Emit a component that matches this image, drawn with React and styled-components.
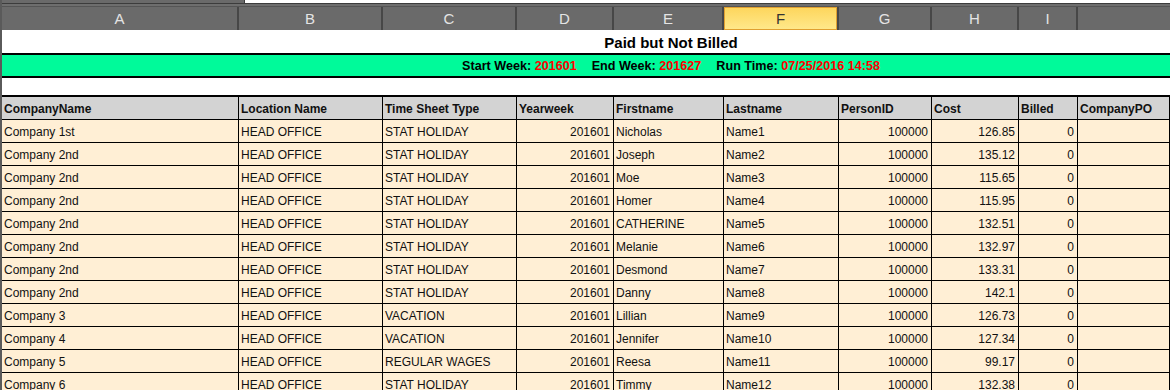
import styled, { createGlobalStyle } from "styled-components";

const GlobalStyle = createGlobalStyle`
  html, body {
    margin: 0;
    padding: 0;
    background: #ffffff;
    overflow: hidden;
  }
  body {
    font-family: "Liberation Sans", Arial, sans-serif;
  }
`;

const COLS = "237px 144px 134px 97px 110px 115px 93px 87px 59px 1fr";

const letters = ["A", "B", "C", "D", "E", "F", "G", "H", "I", ""];

const headers = [
  "CompanyName",
  "Location Name",
  "Time Sheet Type",
  "Yearweek",
  "Firstname",
  "Lastname",
  "PersonID",
  "Cost",
  "Billed",
  "CompanyPO",
];

// which columns are numbers (right aligned)
const numeric = [false, false, false, true, false, false, true, true, true, false];

const rows = [
  ["Company 1st", "STAT HOLIDAY", "Nicholas", "Name1", "126.85"],
  ["Company 2nd", "STAT HOLIDAY", "Joseph", "Name2", "135.12"],
  ["Company 2nd", "STAT HOLIDAY", "Moe", "Name3", "115.65"],
  ["Company 2nd", "STAT HOLIDAY", "Homer", "Name4", "115.95"],
  ["Company 2nd", "STAT HOLIDAY", "CATHERINE", "Name5", "132.51"],
  ["Company 2nd", "STAT HOLIDAY", "Melanie", "Name6", "132.97"],
  ["Company 2nd", "STAT HOLIDAY", "Desmond", "Name7", "133.31"],
  ["Company 2nd", "STAT HOLIDAY", "Danny", "Name8", "142.1"],
  ["Company 3", "VACATION", "Lillian", "Name9", "126.73"],
  ["Company 4", "VACATION", "Jennifer", "Name10", "127.34"],
  ["Company 5", "REGULAR WAGES", "Reesa", "Name11", "99.17"],
  ["Company 6", "STAT HOLIDAY", "Timmy", "Name12", "132.38"],
].map(([company, type, first, last, cost]) => [
  company,
  "HEAD OFFICE",
  type,
  "201601",
  first,
  last,
  "100000",
  cost,
  "0",
  "",
]);

const Sheet = styled.div`
  width: 1170px;
  height: 390px;
  overflow: hidden;
  border-left: 2px solid #5a5a5a;
  box-sizing: border-box;
`;

const TopStrip = styled.div`
  display: flex;
  height: 3px;
  border-bottom: 1px solid #3c3c3c;
`;

const StripTab = styled.div`
  width: 242px;
  background: #6a6a6a;
  border-right: 1px solid #3c3c3c;
`;

const StripBlank = styled.div`
  flex: 1;
  background: #ffffff;
`;

const StripGap = styled.div`
  height: 2px;
  background: #6e6e6e;
  border-bottom: 1px solid #555555;
`;

const LetterRow = styled.div`
  display: grid;
  grid-template-columns: ${COLS};
  height: 23px;
  background: #6a6a6a;
`;

const Letter = styled.div`
  display: flex;
  align-items: center;
  justify-content: center;
  font-size: 15px;
  color: ${(p) => (p.$active ? "#333333" : "#e4e4e4")};
  border-right: 2px solid #474747;
  background: ${(p) =>
    p.$active ? "linear-gradient(#fdd55b, #ffe98c)" : "transparent"};
  box-shadow: ${(p) => (p.$active ? "inset 0 0 0 1px #e0a030" : "none")};
  &:last-child {
    border-right: none;
  }
`;

const TitleRow = styled.div`
  height: 22px;
  border-bottom: 2px solid #000000;
  display: flex;
  align-items: center;
  justify-content: center;
  padding-left: 170px;
  padding-top: 1px;
  box-sizing: content-box;
  font-size: 15px;
  font-weight: 700;
  color: #000000;
`;

const InfoRow = styled.div`
  height: 21px;
  background: #00fa9a;
  border-bottom: 2px solid #000000;
  display: flex;
  align-items: center;
  justify-content: center;
  padding-left: 170px;
  font-size: 12.6px;
  font-weight: 700;
  color: #000000;
`;

const InfoItem = styled.span`
  margin: 0 7.5px;
`;

const Red = styled.span`
  color: #ff0000;
`;

const BlankRow = styled.div`
  height: 17px;
  border-bottom: 2px solid #000000;
`;

const Row = styled.div`
  display: grid;
  grid-template-columns: ${COLS};
  height: 23px;
  background: ${(p) => (p.$head ? "#d3d3d3" : "#ffefd5")};
`;

const Cell = styled.div`
  box-sizing: border-box;
  border-right: 1px solid #000000;
  border-bottom: 1px solid #000000;
  padding: 2px 3px 0 2px;
  display: flex;
  align-items: center;
  justify-content: ${(p) => (p.$num ? "flex-end" : "flex-start")};
  font-size: 12px;
  font-weight: ${(p) => (p.$head ? 700 : 400)};
  color: #111111;
  white-space: nowrap;
  overflow: hidden;
`;

export default function App() {
  return (
    <>
      <GlobalStyle />
      <Sheet>
        <TopStrip>
          <StripTab />
          <StripBlank />
        </TopStrip>
        <StripGap />
        <LetterRow>
          {letters.map((l, i) => (
            <Letter key={i} $active={l === "F"}>
              {l}
            </Letter>
          ))}
        </LetterRow>
        <TitleRow>Paid but Not Billed</TitleRow>
        <InfoRow>
          <InfoItem>
            Start Week: <Red>201601</Red>
          </InfoItem>
          <InfoItem>
            End Week: <Red>201627</Red>
          </InfoItem>
          <InfoItem>
            Run Time: <Red>07/25/2016 14:58</Red>
          </InfoItem>
        </InfoRow>
        <BlankRow />
        <Row $head>
          {headers.map((h) => (
            <Cell key={h} $head>
              {h}
            </Cell>
          ))}
        </Row>
        {rows.map((r, i) => (
          <Row key={i}>
            {r.map((v, j) => (
              <Cell key={j} $num={numeric[j]}>
                {v}
              </Cell>
            ))}
          </Row>
        ))}
      </Sheet>
    </>
  );
}
